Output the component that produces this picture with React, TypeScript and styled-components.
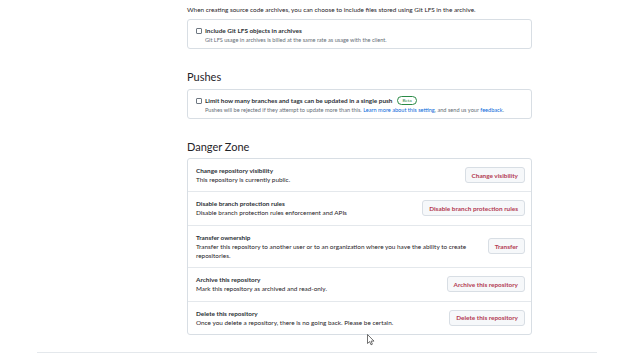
import styled, { createGlobalStyle } from 'styled-components'

const GlobalStyle = createGlobalStyle`
  html, body {
    margin: 0;
    padding: 0;
    background: #ffffff;
  }
  body {
    font-family: Lato, "Liberation Sans", sans-serif;
    color: #1f2328;
  }
`

type DangerItem = {
  title: string
  description: string
  action: string
}

const dangerItems: DangerItem[] = [
  {
    title: 'Change repository visibility',
    description: 'This repository is currently public.',
    action: 'Change visibility',
  },
  {
    title: 'Disable branch protection rules',
    description: 'Disable branch protection rules enforcement and APIs',
    action: 'Disable branch protection rules',
  },
  {
    title: 'Transfer ownership',
    description:
      'Transfer this repository to another user or to an organization where you have the ability to create repositories.',
    action: 'Transfer',
  },
  {
    title: 'Archive this repository',
    description: 'Mark this repository as archived and read-only.',
    action: 'Archive this repository',
  },
  {
    title: 'Delete this repository',
    description: 'Once you delete a repository, there is no going back. Please be certain.',
    action: 'Delete this repository',
  },
]

const Cursor = () => (
  <CursorWrap>
    <svg width="8" height="12" viewBox="0 0 8 12">
      <path
        d="M0.5 0.5 L0.5 9.5 L2.6 7.6 L4 10.8 L5.4 10.2 L4.1 7.1 L7 7.1 Z"
        fill="#ffffff"
        stroke="#333"
        strokeWidth="0.7"
        strokeLinejoin="round"
      />
    </svg>
  </CursorWrap>
)

export default function App() {
  return (
    <>
      <GlobalStyle />
      <Page>
        <Column>
          <Intro>
            When creating source code archives, you can choose to include files stored using Git LFS in the
            archive.
          </Intro>
          <Box>
            <CheckRow>
              <Checkbox />
              <CheckLabel>Include Git LFS objects in archives</CheckLabel>
            </CheckRow>
            <Note>Git LFS usage in archives is billed at the same rate as usage with the client.</Note>
          </Box>

          <Heading>Pushes</Heading>
          <Box>
            <CheckRow>
              <Checkbox />
              <CheckLabel>Limit how many branches and tags can be updated in a single push</CheckLabel>
              <Badge>Beta</Badge>
            </CheckRow>
            <Note>
              Pushes will be rejected if they attempt to update more than this.{' '}
              <TextLink>Learn more about this setting</TextLink>, and send us your{' '}
              <TextLink>feedback</TextLink>.
            </Note>
          </Box>

          <Heading>Danger Zone</Heading>
          <DangerBox>
            {dangerItems.map((item) => (
              <DangerRow key={item.title}>
                <DangerText>
                  <DangerTitle>{item.title}</DangerTitle>
                  <DangerDesc>{item.description}</DangerDesc>
                </DangerText>
                <DangerButton>{item.action}</DangerButton>
              </DangerRow>
            ))}
          </DangerBox>
        </Column>
        <Footer />
        <Cursor />
      </Page>
    </>
  )
}

const Page = styled.div`
  position: relative;
  width: 640px;
  height: 360px;
  overflow: hidden;
  display: flex;
  flex-direction: column;
  align-items: flex-start;
`

const Column = styled.div`
  width: 345px;
  margin-left: 187px;
  padding-top: 5px;
  display: flex;
  flex-direction: column;
`

const Intro = styled.p`
  margin: 0;
  font-size: 6.4px;
  line-height: 9px;
  color: #1f2328;
  white-space: nowrap;
`

const Box = styled.div`
  margin-top: 5px;
  border: 1px solid #d8dee4;
  border-radius: 3px;
  padding: 6px 8px 4px;
  display: flex;
  flex-direction: column;
`

const CheckRow = styled.div`
  display: flex;
  align-items: center;
  height: 9px;
`

const Checkbox = styled.span`
  width: 4px;
  height: 4px;
  border: 1px solid #6e7781;
  border-radius: 1px;
  margin-right: 3px;
  flex-shrink: 0;
`

const CheckLabel = styled.span`
  font-size: 6.4px;
  font-weight: 700;
  line-height: 9px;
  white-space: nowrap;
  color: #2c3136;
`

const Badge = styled.span`
  margin-left: 5px;
  height: 7px;
  padding: 0 4px;
  border: 1px solid #2a8a46;
  border-radius: 5px;
  color: #2a8a46;
  font-size: 4.6px;
  line-height: 7px;
`

const Note = styled.p`
  margin: 0;
  padding-left: 9px;
  font-size: 5.6px;
  line-height: 9px;
  color: #656d76;
  white-space: nowrap;
`

const TextLink = styled.a`
  color: #0969da;
  text-decoration: none;
`

const Heading = styled.h2`
  margin: 21px 0 0;
  font-size: 11px;
  font-weight: 400;
  line-height: 14px;
  color: #1f2328;
`

const DangerBox = styled(Box)`
  margin-top: 4px;
  padding: 0;
`

const DangerRow = styled.div`
  display: flex;
  align-items: center;
  gap: 16px;
  padding: 7px 6px 7.4px 8px;

  & + & {
    border-top: 1px solid #e4e8ec;
  }
`

const DangerText = styled.div`
  flex: 1;
  min-width: 0;
  display: flex;
  flex-direction: column;
`

const DangerTitle = styled.span`
  font-size: 6.4px;
  font-weight: 700;
  line-height: 9px;
  color: #2c3136;
`

const DangerDesc = styled.span`
  font-size: 6.4px;
  line-height: 9px;
  color: #1f2328;
`

const DangerButton = styled.button`
  flex-shrink: 0;
  height: 16px;
  padding: 0 6px;
  border: 1px solid #d8dee4;
  border-radius: 3px;
  background: #f6f8fa;
  color: #b33a52;
  font-family: inherit;
  font-size: 6.4px;
  font-weight: 700;
  white-space: nowrap;
  cursor: pointer;
`

const Footer = styled.div`
  margin-top: auto;
  margin-bottom: 7px;
  margin-left: 37px;
  width: 560px;
  border-top: 1px solid #e4e8ec;
`

const CursorWrap = styled.div`
  position: absolute;
  left: 367px;
  top: 334px;
  line-height: 0;
`
